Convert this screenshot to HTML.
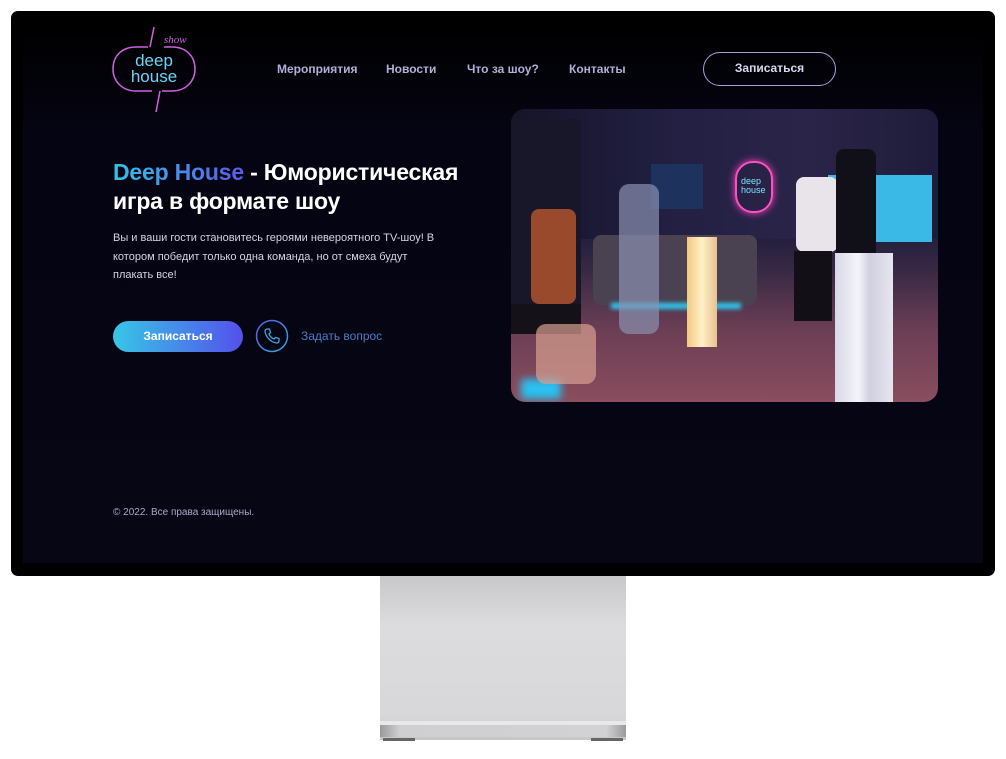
<!DOCTYPE html>
<html><head><meta charset="utf-8"><style>
*{margin:0;padding:0;box-sizing:border-box}
body{width:1006px;height:759px;background:#fff;position:relative;overflow:hidden;font-family:"Liberation Sans",sans-serif}
.frame{position:absolute;left:11px;top:11px;width:984px;height:565px;background:#000;border-radius:7px}
.screen{position:absolute;left:23px;top:23px;width:960px;height:540px;background:linear-gradient(180deg,#000 0%,#050412 20%,#060614 100%);overflow:hidden}
.stand{position:absolute;left:380px;top:576px;width:246px;height:164px;background:linear-gradient(180deg,#c8c8ca 0%,#dcdcde 30%,#d8d8da 85%,#c6c6c8 100%)}
.stand .lip{position:absolute;left:0;right:0;top:145px;height:4px;background:#e8e8ea}
.stand .base{position:absolute;left:0;right:0;top:149px;height:12px;background:linear-gradient(90deg,#9a9a9c,#cfcfd1 8%,#d2d2d4 92%,#9a9a9c)}
.foot{position:absolute;top:738px;width:32px;height:3px;background:#666}
.nav a{position:absolute;top:62px;color:#b0b0d8;font-size:12px;font-weight:bold;text-decoration:none}
.btn-o{position:absolute;left:703px;top:52px;width:133px;height:34px;border:1.5px solid #a6a0d8;border-radius:17px;color:#d8d8f0;font-size:12px;font-weight:bold;text-align:center;line-height:31px}
h1{position:absolute;left:113px;top:158px;font-size:23px;line-height:29px;color:#fff;font-weight:bold;letter-spacing:-0.2px}
h1 span{background:linear-gradient(90deg,#33c2e6,#5a5ae8);-webkit-background-clip:text;color:transparent}
p.d{position:absolute;left:113px;top:229px;width:322px;font-size:11px;line-height:18.5px;color:#d4d4e4}
.btn{position:absolute;left:113px;top:321px;width:130px;height:31px;border-radius:16px;background:linear-gradient(90deg,#37c6e6,#5450ec);color:#fff;font-size:12px;font-weight:bold;text-align:center;line-height:31px}
.ask{position:absolute;left:301px;top:329px;font-size:12px;color:#4a7cc8}
.copy{position:absolute;left:113px;top:507px;font-size:10px;color:#a8a8c8}
.photo{position:absolute;left:511px;top:109px;width:427px;height:293px;border-radius:14px;overflow:hidden;background:linear-gradient(180deg,#1c1a36 0%,#24203e 45%,#3a2a44 56%,#6a3e54 75%,#8a4e5e 100%)}
.photo div{position:absolute}
</style></head><body>
<div class="frame"></div>
<div class="screen"></div>
<svg style="position:absolute;left:108px;top:24px" width="95" height="92" viewBox="0 0 95 92">
<g fill="none" stroke="#d060e0" stroke-width="1.5">
<path d="M46 3 L42 23"/><path d="M52 67 L48 88"/>
<path d="M40 23 H28 C14 23 5 32 5 45 C5 57 14 67 28 67 H44"/>
<path d="M56 23 H64 C78 23 87 32 87 45 C87 57 78 67 64 67 H54"/>
</g>
<text x="56" y="19" font-family="Liberation Serif" font-style="italic" font-size="11" fill="#d060e0">show</text>
<text x="46" y="42" text-anchor="middle" font-size="17" fill="#6cd4f4" font-family="Liberation Sans">deep</text>
<text x="46" y="58" text-anchor="middle" font-size="17" fill="#6cd4f4" font-family="Liberation Sans">house</text>
</svg>
<div class="nav"><a style="left:277px">Мероприятия</a><a style="left:386px">Новости</a><a style="left:467px">Что за шоу?</a><a style="left:569px">Контакты</a></div>
<div class="btn-o">Записаться</div>
<h1><span>Deep House</span> - Юмористическая<br>игра в формате шоу</h1>
<p class="d">Вы и ваши гости становитесь героями невероятного TV-шоу! В котором победит только одна команда, но от смеха будут плакать все!</p>
<div class="btn">Записаться</div>
<svg style="position:absolute;left:255px;top:319px" width="34" height="34" viewBox="0 0 34 34"><defs><linearGradient id="g" x1="0" y1="0" x2="1" y2="1"><stop offset="0" stop-color="#5a5ae8"/><stop offset="1" stop-color="#33a8d8"/></linearGradient></defs><circle cx="17" cy="17" r="15.5" fill="none" stroke="url(#g)" stroke-width="1.5"/><path d="M12 10 L14.5 10 L15.5 13.5 L14 15 C15 17.5 16.5 19 19 20 L20.5 18.5 L24 19.5 L24 22 C24 23 23 24 22 24 C16 23.5 10.5 18 10 12 C10 11 11 10 12 10Z" fill="none" stroke="#3aa8d8" stroke-width="1.3"/></svg>
<div class="ask">Задать вопрос</div>
<div class="photo">
<div style="left:0;top:0;width:427px;height:130px;background:linear-gradient(90deg,#151428,#232044 40%,#2a2448 70%,#1e1c3a)"></div>
<div style="left:0;top:10px;width:70px;height:200px;background:#18172a"></div>
<div style="left:82px;top:126px;width:164px;height:70px;background:#4a4250;border-radius:8px"></div>
<div style="left:100px;top:194px;width:130px;height:6px;background:#30c8f0;filter:blur(2px)"></div>
<div style="left:10px;top:270px;width:40px;height:20px;background:#2ac0f0;filter:blur(4px)"></div>
<div style="left:140px;top:55px;width:52px;height:45px;background:#1c3a6a;opacity:.7"></div>
<div style="left:224px;top:52px;width:38px;height:52px;border:2px solid #ff50c0;border-radius:18px;box-shadow:0 0 8px #ff40c0"></div>
<div style="left:230px;top:68px;font-size:9px;color:#80e0ff;line-height:9px">deep<br>house</div>
<div style="left:317px;top:66px;width:104px;height:67px;background:#3ab8e6"></div>
<div style="left:20px;top:100px;width:45px;height:95px;background:#9a4a2c;border-radius:8px"></div>
<div style="left:0;top:195px;width:70px;height:30px;background:#141218"></div>
<div style="left:25px;top:215px;width:60px;height:60px;background:#d8a090;opacity:.7;border-radius:10px"></div>
<div style="left:108px;top:75px;width:40px;height:150px;background:#8a90b0;opacity:.7;border-radius:10px"></div>
<div style="left:285px;top:68px;width:42px;height:75px;background:#e8e4ea;border-radius:8px"></div>
<div style="left:283px;top:142px;width:38px;height:70px;background:#121016"></div>
<div style="left:325px;top:40px;width:40px;height:175px;background:#111018;border-radius:8px"></div>
<div style="left:176px;top:128px;width:30px;height:110px;background:linear-gradient(90deg,#f2c880,#fff0c8,#e8c090)"></div>
<div style="left:324px;top:144px;width:58px;height:149px;background:linear-gradient(90deg,#d8d8e8,#f4f4fa 40%,#d0d0e0 60%,#e6e6f0)"></div>
</div>
<div class="copy">© 2022. Все права защищены.</div>
<div class="stand"><div class="lip"></div><div class="base"></div></div>
<div class="foot" style="left:383px"></div><div class="foot" style="left:591px"></div>
</body></html>
